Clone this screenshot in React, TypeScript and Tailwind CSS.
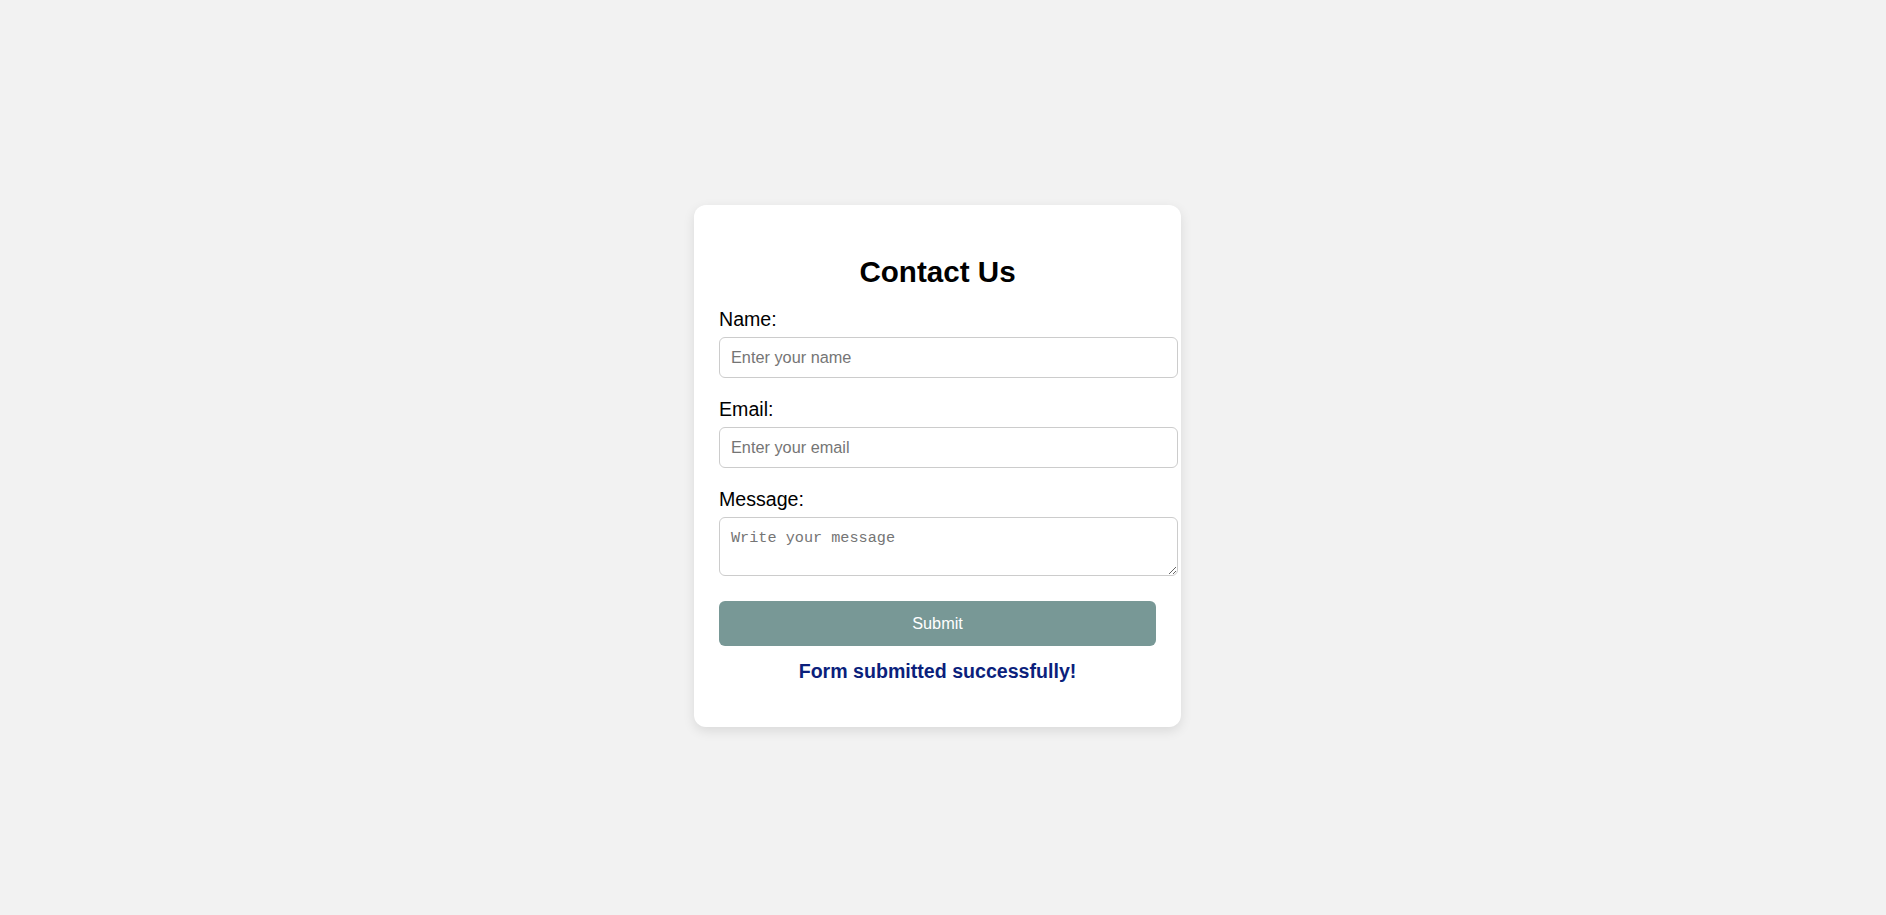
import { useState } from "react"

export default function App() {
    const [name, setName] = useState("")
    const [email, setEmail] = useState("")
    const [message, setMessage] = useState("")

    return (
        <div
            className="w-full min-h-screen bg-[#f2f2f2] flex justify-center items-start pt-[205px] pr-[11px]"
            style={{ fontFamily: '"Liberation Sans", Arial, sans-serif' }}
        >
            <div className="w-[487px] bg-white rounded-[12px] shadow-[0_4px_12px_rgba(0,0,0,0.1)] px-[25px] pt-[50px] pb-[45px]">
                <h2 className="text-[29.6px] font-bold text-black text-center leading-[34px] mb-[19px]">Contact Us</h2>

                <form onSubmit={(e) => e.preventDefault()}>
                    {/* Name */}
                    <div className="mb-[20px]">
                        <label className="block text-[19.6px] leading-[22px] text-black mb-[7px]">Name:</label>
                        <input
                            type="text"
                            placeholder="Enter your name"
                            value={name}
                            onChange={(e) => setName(e.target.value)}
                            className="block w-[459px] h-[41px] px-[11px] border border-[#cccccc] rounded-[6px] text-[16.3px] text-black placeholder:text-[#757575] outline-none"
                        />
                    </div>

                    {/* Email */}
                    <div className="mb-[20px]">
                        <label className="block text-[19.6px] leading-[22px] text-black mb-[7px]">Email:</label>
                        <input
                            type="email"
                            placeholder="Enter your email"
                            value={email}
                            onChange={(e) => setEmail(e.target.value)}
                            className="block w-[459px] h-[41px] px-[11px] border border-[#cccccc] rounded-[6px] text-[16.3px] text-black placeholder:text-[#757575] outline-none"
                        />
                    </div>

                    {/* Message */}
                    <div className="mb-[25px]">
                        <label className="block text-[19.6px] leading-[22px] text-black mb-[7px]">Message:</label>
                        <textarea
                            placeholder="Write your message"
                            value={message}
                            onChange={(e) => setMessage(e.target.value)}
                            className="block w-[459px] h-[59px] px-[11px] pt-[11px] border border-[#cccccc] rounded-[6px] text-[15.2px] leading-[18px] text-black placeholder:text-[#757575] outline-none resize-y"
                            style={{ fontFamily: '"Liberation Mono", "DejaVu Sans Mono", monospace' }}
                        />
                    </div>

                    <button
                        type="submit"
                        className="block w-[437px] h-[45px] bg-[#789896] text-white text-[16.3px] rounded-[6px] cursor-pointer"
                    >
                        Submit
                    </button>
                </form>

                <p className="text-center text-[19.6px] font-bold text-[#0b1f7c] leading-[22px] mt-[14px]">
                    Form submitted successfully!
                </p>
            </div>
        </div>
    )
}
